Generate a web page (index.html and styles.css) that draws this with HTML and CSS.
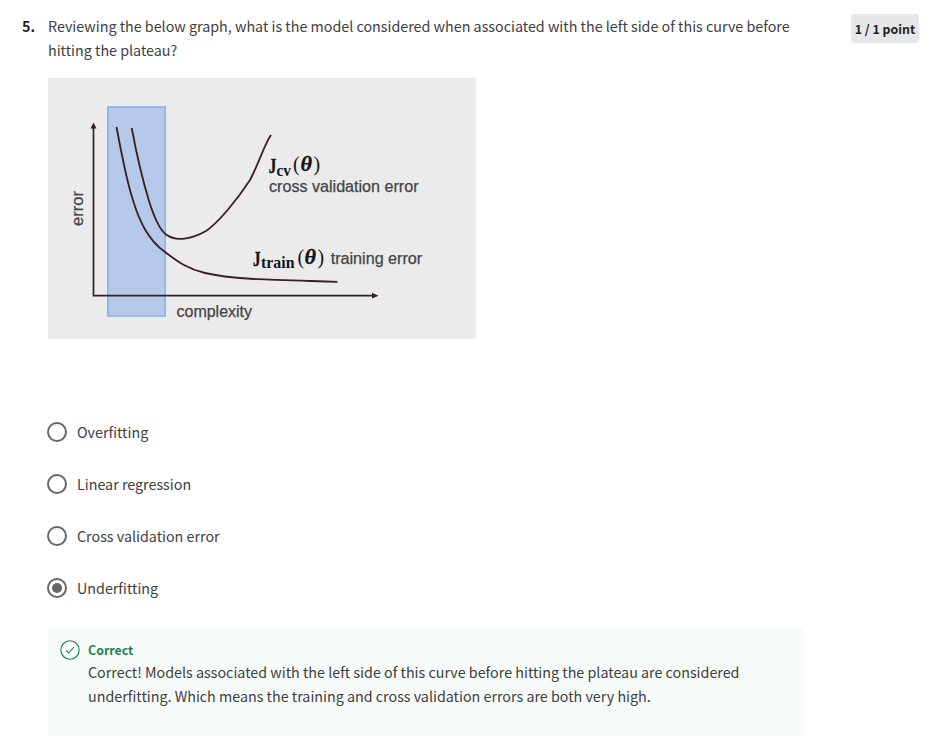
FILE: index.html
```html
<!DOCTYPE html>
<html lang="en">
<head>
<meta charset="utf-8">
<title>Quiz question 5</title>
<link rel="stylesheet" href="styles.css">
</head>
<body>
<main class="question">
  <header class="prompt">
    <span class="number">5.</span>
    <p class="prompt-text">Reviewing the below graph, what is the model considered when associated with the left side of this curve before<br>hitting the plateau?</p>
    <span class="points">1 / 1 point</span>
  </header>
  <div class="body">
    <svg class="graph" width="428" height="261" viewBox="48 78 428 261" role="img" aria-label="Error against model complexity">
      <rect class="graph-bg" x="48" y="78" width="428" height="261"/>
      <rect class="band" x="107.8" y="107" width="57.4" height="209"/>
      <path class="axis" d="M93.5 127V295.7H373"/>
      <path class="arrow" d="M90.5 128.5L93.5 122.5L96.5 128.5ZM372 292.8L378.5 295.7L372 298.6Z"/>
      <path class="curve" d="M116.5 127C121 151 126 178 132 197C139 221 148 240 165 252C178 262 188 269 205 273C235 280 280 280 337.5 281.8"/>
      <path class="curve" d="M131.7 128C136 151 142 178 149 201C155 220 160 230 166 234.5C176 242 192 239 206 231C218 223 237 200 250 180C260 161 264 145 271 135"/>
      <text class="label" transform="translate(83 226) rotate(-90)" textLength="35" lengthAdjust="spacingAndGlyphs">error</text>
      <text class="label" x="176.5" y="317" textLength="75.5" lengthAdjust="spacingAndGlyphs">complexity</text>
      <text class="math jay" x="268.8" y="173" textLength="7.5" lengthAdjust="spacingAndGlyphs">J</text>
      <text class="math sub" x="276.6" y="175.5" textLength="14.4" lengthAdjust="spacingAndGlyphs">cv</text>
      <text class="math paren" x="293" y="171">(</text>
      <text class="math theta" x="300.5" y="171" textLength="11.5" lengthAdjust="spacingAndGlyphs">θ</text>
      <text class="math paren" x="313.5" y="171">)</text>
      <text class="label" x="269" y="191.7" textLength="149.5" lengthAdjust="spacingAndGlyphs">cross validation error</text>
      <text class="math jay" x="253" y="265.5" textLength="7.5" lengthAdjust="spacingAndGlyphs">J</text>
      <text class="math sub" x="261" y="268" textLength="33.5" lengthAdjust="spacingAndGlyphs">train</text>
      <text class="math paren" x="297.5" y="264">(</text>
      <text class="math theta" x="304.5" y="264" textLength="11.5" lengthAdjust="spacingAndGlyphs">θ</text>
      <text class="math paren" x="317.5" y="264">)</text>
      <text class="label" x="330.7" y="264" textLength="91.5" lengthAdjust="spacingAndGlyphs">training error</text>
    </svg>
    <div class="options">
      <div class="option"><span class="radio"></span><span>Overfitting</span></div>
      <div class="option"><span class="radio"></span><span>Linear regression</span></div>
      <div class="option"><span class="radio"></span><span>Cross validation error</span></div>
      <div class="option"><span class="radio checked"></span><span>Underfitting</span></div>
    </div>
    <section class="feedback">
      <svg class="check" width="20" height="20" viewBox="0 0 20 20" aria-hidden="true"><circle cx="10" cy="10" r="9.2"/><path d="M6 10.3L8.8 13L14 7"/></svg>
      <div class="feedback-copy">
        <h2>Correct</h2>
        <p>Correct! Models associated with the left side of this curve before hitting the plateau are considered<br>underfitting. Which means the training and cross validation errors are both very high.</p>
      </div>
    </section>
  </div>
</main>
</body>
</html>
```
FILE: styles.css
```css
* { box-sizing: border-box; }
body {
  margin: 0;
  background: #fff;
  color: #404040;
  font-family: "Noto Sans CJK SC", "Open Sans", sans-serif;
  font-size: 14.31px;
  line-height: 24px;
}
p, h2 { margin: 0; }
.question { padding: 14px 23px 0 22px; }
.prompt { display: flex; align-items: flex-start; height: 64px; }
.number { width: 26px; flex: none; font-weight: 700; color: #1f1f1f; }
.prompt-text { flex: 1; white-space: nowrap; }
.points {
  flex: none;
  width: 68px;
  height: 29px;
  border-radius: 4px;
  background: #e5e7e8;
  color: #1f1f1f;
  font-size: 12.4px;
  font-weight: 700;
  line-height: 30px;
  text-align: center;
  white-space: nowrap;
}
.body { margin-left: 26px; width: 756px; }
.graph { display: block; }
.graph-bg { fill: #ebebeb; }
.band { fill: #b7c9ea; stroke: #86b0ea; stroke-width: 1.5; }
.axis { fill: none; stroke: #35202a; stroke-width: 1.7; }
.arrow { fill: #35202a; }
.curve { fill: none; stroke: #35202a; stroke-width: 1.8; }
.label { font: 16px "Liberation Sans", sans-serif; fill: #444; stroke: #444; stroke-width: .25; }
.math { font: 700 20px "Liberation Serif", serif; fill: #151515; }
.math.jay { stroke: #151515; stroke-width: .5; }
.math.sub { font-size: 16px; }
.math.paren { font-weight: 400; font-size: 20px; }
.math.theta { font-style: italic; font-size: 21px; stroke: #151515; stroke-width: .3; }
.options { display: flex; flex-direction: column; gap: 28px; margin-top: 81px; }
.option { display: flex; align-items: center; gap: 10px; height: 24px; margin-left: -1px; }
.radio { display: grid; place-items: center; width: 20px; height: 20px; border: 2px solid #666; border-radius: 50%; }
.checked::after { content: ""; width: 10px; height: 10px; border-radius: 50%; background: #666; }
.feedback { display: flex; gap: 8px; height: 108px; margin-top: 28px; padding: 12px; background: #f7fbf9; }
.check { flex: none; fill: none; stroke: #1f8354; stroke-width: 1.1; }
.feedback h2 { font-size: 12.4px; line-height: 20px; color: #1f8354; }
.feedback p { white-space: nowrap; }
```
